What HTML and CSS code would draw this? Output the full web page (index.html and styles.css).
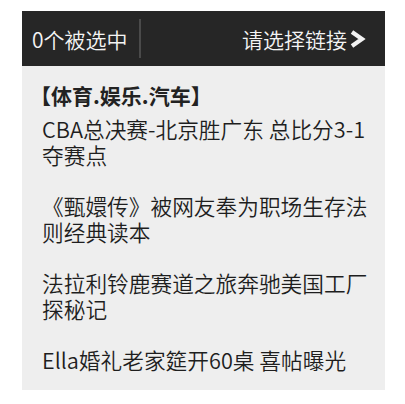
FILE: index.html
```html
<!DOCTYPE html>
<html lang="zh-CN">
<head>
<meta charset="utf-8">
<title>链接选择</title>
<link rel="stylesheet" href="styles.css">
</head>
<body>
<div class="wrap">
  <div class="bar">
    <div class="count">0个被选中</div>
    <div class="sep"></div>
    <div class="choose">请选择链接<svg class="arrow" width="18" height="18" viewBox="0 0 18 18"><polyline points="4,2 14,9 4,16" fill="none" stroke="#f2f2f2" stroke-width="4.2" stroke-linejoin="miter" stroke-linecap="butt"/></svg></div>
  </div>
  <div class="panel">
    <div class="cat">【体育.娱乐.汽车】</div>
    <ul class="list">
      <li>CBA总决赛-北京胜广东 总比分3-1夺赛点</li>
      <li>《甄嬛传》被网友奉为职场生存法则经典读本</li>
      <li>法拉利铃鹿赛道之旅奔驰美国工厂探秘记</li>
      <li>Ella婚礼老家筵开60桌 喜帖曝光</li>
    </ul>
  </div>
</div>
</body>
</html>
```

FILE: styles.css
```css
html, body {
  margin: 0;
  padding: 0;
  background: #ffffff;
}
body {
  font-family: "Noto Sans CJK SC", "Noto Sans", sans-serif;
  color: #1e1e1e;
}
.wrap {
  margin: 11px 0 0 22px;
  width: 363px;
}
.bar {
  height: 55px;
  background: #262626;
  color: #f4f4f4;
  display: flex;
  align-items: center;
  padding: 0 19px 0 10px;
  font-size: 21px;
  font-weight: 350;
}
.count {
  line-height: 26px;
}
.sep {
  width: 2px;
  height: 39px;
  background: #4a4a4a;
  margin-left: 11px;
}
.choose {
  margin-left: auto;
  display: flex;
  align-items: center;
  line-height: 26px;
}
.arrow {
  margin-left: 1px;
  display: block;
}
.panel {
  background: #eeeeee;
  padding: 16px 6px 17px 20px;
}
.cat {
  font-size: 21px;
  font-weight: bold;
  line-height: 26px;
  margin-left: -12px;
  color: #222222;
}
.list {
  list-style: none;
  margin: 8px 0 0 0;
  padding: 0;
}
.list li {
  font-size: 21.7px;
  font-weight: 350;
  line-height: 26px;
  margin-bottom: 25px;
}
.list li:last-child {
  margin-bottom: 0;
}
```
